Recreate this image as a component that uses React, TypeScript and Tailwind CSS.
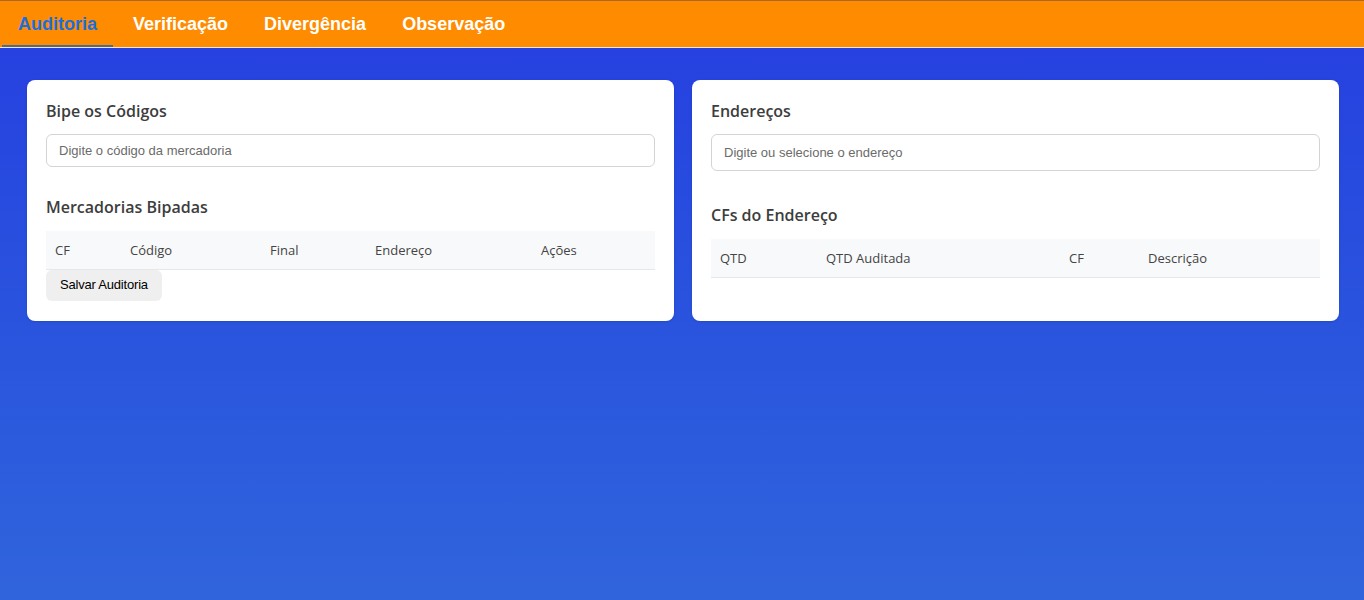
const tabs = ['Auditoria', 'Verificação', 'Divergência', 'Observação'];

const leftCols = [
  { label: 'CF', w: 'w-[75px]' },
  { label: 'Código', w: 'w-[140px]' },
  { label: 'Final', w: 'w-[105px]' },
  { label: 'Endereço', w: 'w-[166px]' },
  { label: 'Ações', w: '' },
];

const rightCols = [
  { label: 'QTD', w: 'w-[106px]' },
  { label: 'QTD Auditada', w: 'w-[243px]' },
  { label: 'CF', w: 'w-[79px]' },
  { label: 'Descrição', w: '' },
];

const HeaderRow = ({ cols }: { cols: { label: string; w: string }[] }) => (
  <table className="w-full border-collapse table-fixed">
    <thead>
      <tr className="bg-[#f8f9fa] border-b border-[#e5e7eb]">
        {cols.map((c) => (
          <th
            key={c.label}
            className={`${c.w} h-[38px] px-[9px] pt-[2px] text-left text-[13px] font-normal text-[#444] font-['Open_Sans',sans-serif]`}
          >
            {c.label}
          </th>
        ))}
      </tr>
    </thead>
  </table>
);

export default function App() {
  return (
    <div className="min-h-[600px] flex flex-col bg-gradient-to-b from-[#263de0] to-[#3064dc]">
      <nav className="h-[48px] bg-[#ff8c00] border-t border-[#a8692a] border-b border-b-[#f0e6dc] flex items-stretch pl-[2px] gap-1 font-['Liberation_Sans',Arial,sans-serif]">
        {tabs.map((t, i) => (
          <div
            key={t}
            className={`px-4 pt-[2px] flex items-center text-[18px] font-bold border-b-2 ${
              i === 0 ? 'text-[#1a6fe0] border-[#4f6b8c]' : 'text-white border-transparent'
            }`}
          >
            {t}
          </div>
        ))}
      </nav>

      <main className="grid grid-cols-2 gap-[18px] pl-[27px] pr-[25px] pt-[32px]">
        <section className="bg-white rounded-lg px-[19px] pt-5 pb-5 shadow-sm">
          <h2 className="text-[16px] leading-[22px] font-semibold text-[#3d3d3d] font-['Open_Sans',sans-serif]">
            Bipe os Códigos
          </h2>
          <input
            className="mt-3 w-full h-[33px] border border-[#d4d4d4] rounded-md px-[12px] text-[13px] font-['Liberation_Sans',Arial,sans-serif] placeholder:text-[#6b6b6b] outline-none"
            placeholder="Digite o código da mercadoria"
          />
          <h2 className="mt-[29px] text-[16px] leading-[22px] font-semibold text-[#3d3d3d] font-['Open_Sans',sans-serif]">
            Mercadorias Bipadas
          </h2>
          <div className="mt-[13px]">
            <HeaderRow cols={leftCols} />
          </div>
          <button className="h-[31px] px-[14px] bg-[#efefef] rounded-md text-[13px] tracking-[-0.2px] text-black font-['Liberation_Sans',Arial,sans-serif]">
            Salvar Auditoria
          </button>
        </section>

        <section className="bg-white rounded-lg px-[19px] pt-5 pb-5 shadow-sm">
          <h2 className="text-[16px] leading-[22px] font-semibold text-[#3d3d3d] font-['Open_Sans',sans-serif]">
            Endereços
          </h2>
          <input
            className="mt-3 w-full h-[37px] border border-[#d4d4d4] rounded-md px-[12px] text-[13px] font-['Liberation_Sans',Arial,sans-serif] placeholder:text-[#6b6b6b] outline-none"
            placeholder="Digite ou selecione o endereço"
          />
          <h2 className="mt-[33px] text-[16px] leading-[22px] font-semibold text-[#3d3d3d] font-['Open_Sans',sans-serif]">
            CFs do Endereço
          </h2>
          <div className="mt-[13px]">
            <HeaderRow cols={rightCols} />
          </div>
        </section>
      </main>
    </div>
  );
}
